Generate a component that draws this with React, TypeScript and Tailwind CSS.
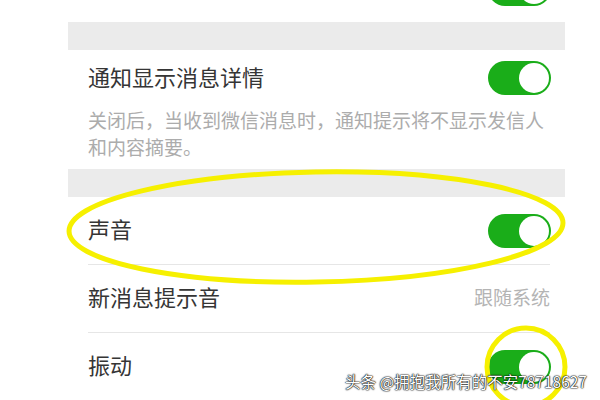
import React from 'react';

const Toggle: React.FC = () => (
  <div className="w-[63px] h-[34px] rounded-full bg-[#1aad19] flex items-center justify-end pr-[2px] shrink-0">
    <div className="w-[30px] h-[30px] rounded-full bg-white" />
  </div>
);

const Row: React.FC<{ label: string; right?: React.ReactNode; height?: string; divider?: boolean }> = ({
  label,
  right,
  height = 'h-[67px]',
  divider,
}) => (
  <div className="flex flex-col">
    <div className={`${height} flex items-center justify-between pl-[20px] pr-[14px]`}>
      <span className="text-[22px] text-[#353535] leading-none pb-[5px] whitespace-nowrap">{label}</span>
      {right}
    </div>
    {divider && <div className="h-px ml-[20px] mr-[15px] bg-[#e6e6e6]" />}
  </div>
);

export default function App() {
  return (
    <div
      className="relative w-[600px] h-[400px] overflow-hidden bg-white"
      style={{ fontFamily: '"Noto Sans CJK SC", "Noto Sans", sans-serif' }}
    >
      <div className="ml-[68px] w-[497px] -mt-[45px]">
        <Row label="接收语音和视频聊天邀请通知" right={<Toggle />} />
        <div className="h-[28px] bg-[#ebebeb]" />
        <Row label="通知显示消息详情" height="h-[56px]" right={<Toggle />} />
        <div className="h-[63px] pl-[20px] pr-[18px] text-[19px] leading-[27px] text-[#acacac]">
          关闭后，当收到微信消息时，通知提示将不显示发信人和内容摘要。
        </div>
        <div className="h-[28px] bg-[#ebebeb]" />
        <Row label="声音" right={<Toggle />} divider />
        <Row
          label="新消息提示音"
          right={<span className="text-[19px] text-[#b4b4b4] leading-none pb-[4px] pr-px">跟随系统</span>}
          divider
        />
        <Row label="振动" right={<Toggle />} />
      </div>

      {/* yellow annotation marks */}
      <svg className="absolute inset-0 pointer-events-none" width="600" height="400" viewBox="0 0 600 400">
        <ellipse cx="316" cy="227" rx="247" ry="55" fill="none" stroke="#f6f000" strokeWidth="5" transform="rotate(-1 316 227)" />
        <circle cx="526" cy="367" r="39" fill="none" stroke="#f6f000" strokeWidth="5" />
      </svg>

      <div className="absolute left-[345px] top-[370px] text-[15.5px] leading-[22px] text-white whitespace-nowrap [text-shadow:0_0_2px_#000,0_0_1px_#000,0_0_1px_#000]">
        头条 @拥抱我所有的不安78718627
      </div>
    </div>
  );
}
